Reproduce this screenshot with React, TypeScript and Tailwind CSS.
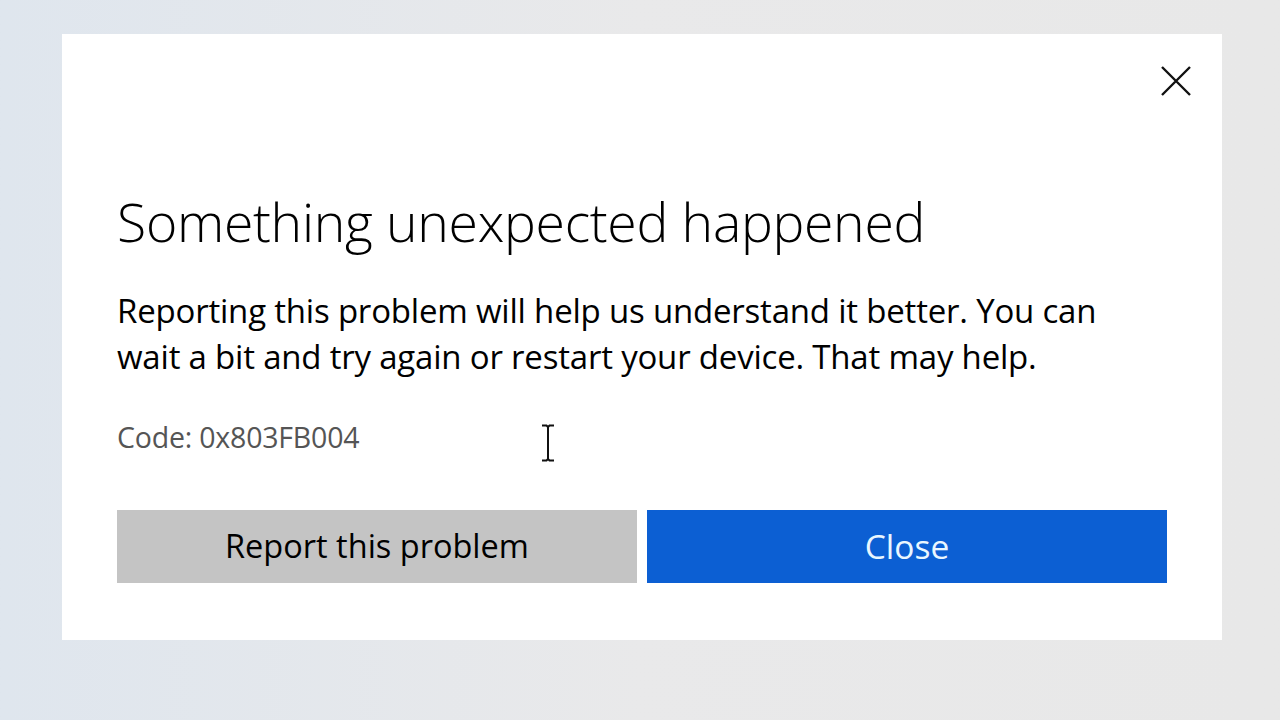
const App = () => {
  return (
    <div
      className="w-[1280px] h-[720px] overflow-hidden bg-gradient-to-r from-[#dfe6ee] via-[#e9e9ea] to-[#e8e8e8] pt-[34px] pl-[62px]"
      style={{ fontFamily: '"Open Sans", "Noto Sans", sans-serif' }}>
      <div className="w-[1160px] h-[606px] bg-white flex flex-col px-[55px]">
        <div className="flex justify-end pt-[30px] -mr-[26px]">
          <button className="w-[34px] h-[34px] flex items-center justify-center">
            <svg width="32" height="32" viewBox="0 0 32 32">
              <path
                d="M2 2 L30 30 M30 2 L2 30"
                stroke="#111"
                strokeWidth="2.4"
                fill="none"
              />
            </svg>
          </button>
        </div>
        <h1 className="mt-[94px] text-[53.5px] leading-[60px] font-light text-black tracking-[-0.3px]">
          Something unexpected happened
        </h1>
        <p className="mt-[36px] text-[33px] leading-[46px] text-black tracking-[-0.2px]">
          Reporting this problem will help us understand it better. You can
          <br />
          wait a bit and try again or restart your device. That may help.
        </p>
        <div className="mt-[39px] flex items-center h-[36px]">
          <span className="text-[28.5px] text-[#555] tracking-[-0.2px]">
            Code: 0x803FB004
          </span>
          <svg className="ml-[182px] mt-[12px]" width="14" height="38" viewBox="0 0 14 38">
            <path
              d="M1 1.5 H5.5 L7 3 L8.5 1.5 H13 M7 3 V35 M1 36.5 H5.5 L7 35 L8.5 36.5 H13"
              stroke="#111"
              strokeWidth="2"
              fill="none"
            />
          </svg>
        </div>
        <div className="mt-[55px] flex gap-[10px]">
          <button className="flex-1 h-[73px] bg-[#c4c4c4] text-[32.5px] text-black">
            Report this problem
          </button>
          <button className="flex-1 h-[73px] bg-[#0c5fd3] text-[33.5px] text-[#e9f6ff]">
            Close
          </button>
        </div>
      </div>
    </div>
  );
};

export default App;
